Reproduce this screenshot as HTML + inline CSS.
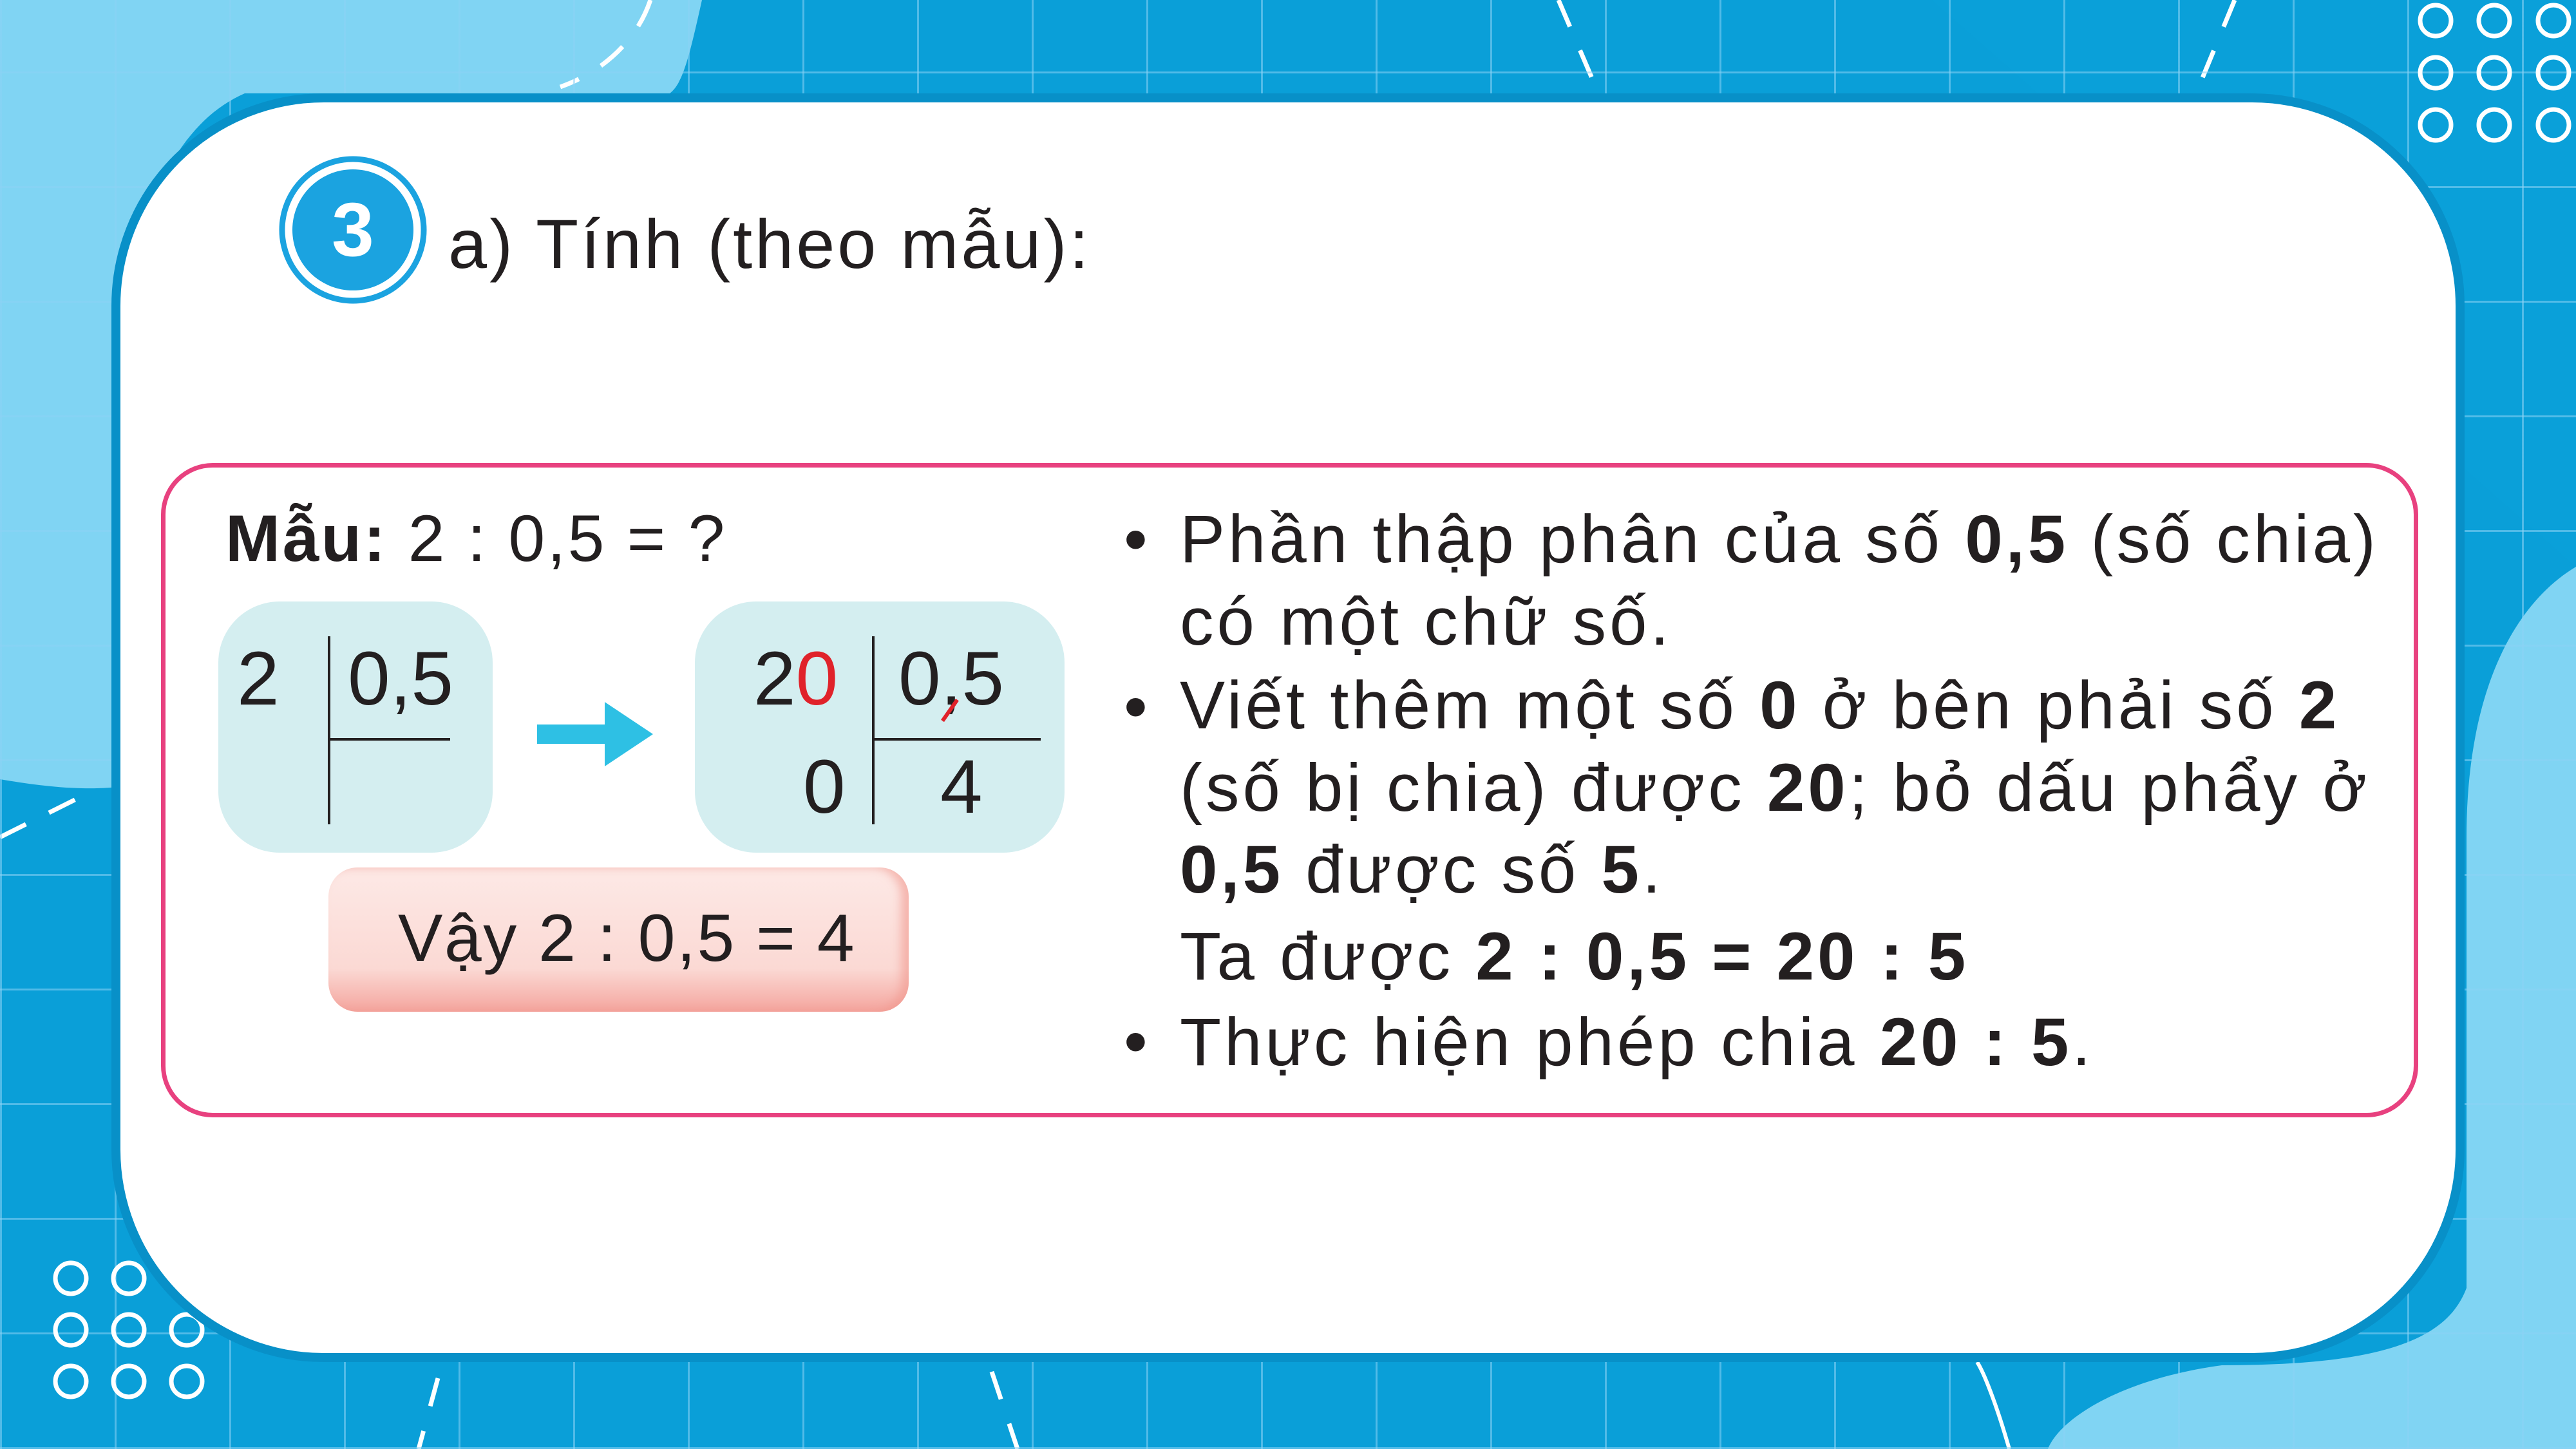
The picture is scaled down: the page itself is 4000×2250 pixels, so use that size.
<!DOCTYPE html>
<html><head><meta charset="utf-8"><style>
*{margin:0;padding:0;box-sizing:border-box}
body{width:4000px;height:2250px;overflow:hidden;position:relative;background:#0a9fd8;font-family:"Liberation Sans",sans-serif;color:#231f20}
.grid{position:absolute;inset:0;background-image:repeating-linear-gradient(90deg,rgba(140,210,245,.55) 0 3px,transparent 3px 178px),repeating-linear-gradient(0deg,rgba(140,210,245,.55) 0 3px,transparent 3px 178px)}
.abs{position:absolute}
.card{left:173px;top:145px;width:3654px;height:1970px;background:#fff;border-radius:330px;border:14px solid #0890c8}
.pink{left:250px;top:719px;width:3505px;height:1016px;border:7px solid #e8417f;border-radius:80px}
.lb{background:#d4eef0;border-radius:95px}
.t{position:absolute;white-space:nowrap;font-size:105px;line-height:1;letter-spacing:5px}
b{font-weight:bold}
</style></head><body>
<svg class="abs" style="left:0;top:0" width="4000" height="2250">
<path d="M0 0H1090C1070 90 1060 130 1040 145H380C300 180 250 260 200 400V1220C130 1230 60 1220 0 1210Z" fill="#80d4f3"/>
<path d="M4000 880C3900 940 3830 1080 3830 1300V2000C3800 2080 3700 2120 3450 2120C3300 2140 3200 2200 3180 2250H4000Z" fill="#80d4f3"/>
<path d="M3000 0H4000V880L3000 0Z" fill="#0aa3dc" opacity=".4"/>
<path d="M0 1300 140 1230" stroke="#fff" stroke-width="7" stroke-dasharray="45 40" fill="none"/>
<path d="M1010 0C990 60 940 110 870 135" stroke="#fff" stroke-width="7" stroke-dasharray="45 40" fill="none"/>
<path d="M3470 0 3410 145" stroke="#fff" stroke-width="7" stroke-dasharray="45 40" fill="none"/>
<path d="M2420 0 2480 140" stroke="#fff" stroke-width="7" stroke-dasharray="45 40" fill="none"/>
<path d="M680 2140 650 2250M1540 2130 1580 2250" stroke="#fff" stroke-width="7" stroke-dasharray="45 40" fill="none"/>
<path d="M3120 2250C3100 2180 3080 2130 3070 2115" stroke="#fff" stroke-width="6" fill="none"/>
</svg>
<div class="grid"></div>
<svg class="abs" style="left:0;top:0" width="4000" height="2250" fill="none" stroke="#fff" stroke-width="7">
<g><circle cx="3782" cy="32" r="24"/><circle cx="3873" cy="32" r="24"/><circle cx="3965" cy="32" r="24"/>
<circle cx="3782" cy="113" r="24"/><circle cx="3873" cy="113" r="24"/><circle cx="3965" cy="113" r="24"/>
<circle cx="3782" cy="194" r="24"/><circle cx="3873" cy="194" r="24"/><circle cx="3965" cy="194" r="24"/></g>
<g><circle cx="110" cy="1985" r="24"/><circle cx="200" cy="1985" r="24"/><circle cx="290" cy="1985" r="24"/>
<circle cx="110" cy="2065" r="24"/><circle cx="200" cy="2065" r="24"/><circle cx="290" cy="2065" r="24"/>
<circle cx="110" cy="2145" r="24"/><circle cx="200" cy="2145" r="24"/><circle cx="290" cy="2145" r="24"/></g>
</svg>
<div class="abs card"></div>
<svg class="abs" style="left:430px;top:240px" width="240" height="240">
<circle cx="118" cy="117" r="110" fill="#fff" stroke="#1ba3e0" stroke-width="9"/>
<circle cx="118" cy="117" r="94" fill="#1ba3e0"/>
<text x="118" y="157" text-anchor="middle" font-family="Liberation Sans" font-weight="bold" font-size="118" fill="#fff">3</text>
</svg>
<div class="t" style="left:696px;top:325px;font-size:108px;letter-spacing:4px">a) Tính (theo mẫu):</div>
<div class="abs pink"></div>
<div class="t" style="left:350px;top:785px;font-size:102px;letter-spacing:3.5px"><b>Mẫu:</b> 2 : 0,5 = ?</div>
<div class="abs lb" style="left:339px;top:934px;width:426px;height:390px"></div>
<div class="abs lb" style="left:1079px;top:934px;width:574px;height:390px"></div>
<div class="abs" style="left:509px;top:988px;width:4px;height:292px;background:#231f20"></div>
<div class="abs" style="left:509px;top:1146px;width:190px;height:4px;background:#231f20"></div>
<div class="t" style="left:368px;top:995px;font-size:118px;letter-spacing:0">2</div>
<div class="t" style="left:540px;top:995px;font-size:118px;letter-spacing:0">0,5</div>
<div class="abs" style="left:1354px;top:988px;width:4px;height:292px;background:#231f20"></div>
<div class="abs" style="left:1354px;top:1146px;width:262px;height:4px;background:#231f20"></div>
<div class="t" style="left:1170px;top:995px;font-size:118px;letter-spacing:0">2<span style="color:#e0222a">0</span></div>
<div class="t" style="left:1395px;top:995px;font-size:118px;letter-spacing:0">0,5</div>
<div class="abs" style="left:1472px;top:1083px;width:6px;height:40px;background:#e0222a;transform:rotate(35deg)"></div>
<div class="t" style="left:1247px;top:1163px;font-size:118px;letter-spacing:0">0</div>
<div class="t" style="left:1460px;top:1163px;font-size:118px;letter-spacing:0">4</div>
<svg class="abs" style="left:834px;top:1090px" width="180" height="100"><path d="M0 35H105V0L180 50 105 100V65H0Z" fill="#2ec0e4"/></svg>
<div class="abs" style="left:510px;top:1347px;width:901px;height:224px;border-radius:45px;background:linear-gradient(#fde9e6 0%,#fbd9d4 70%,#f4a59e 100%);box-shadow:inset -12px 0 14px rgba(240,150,140,.6)"></div>
<div class="t" style="left:618px;top:1405px;font-size:104px;letter-spacing:2.5px">Vậy 2 : 0,5 = 4</div>
<div class="t" style="left:1745px;top:785px;letter-spacing:0">•</div>
<div class="t" style="left:1745px;top:1045px;letter-spacing:0">•</div>
<div class="t" style="left:1745px;top:1565px;letter-spacing:0">•</div>
<div class="t" style="left:1832px;top:785px">Phần thập phân của số <b>0,5</b> (số chia)</div>
<div class="t" style="left:1832px;top:913px">có một chữ số.</div>
<div class="t" style="left:1832px;top:1043px">Viết thêm một số <b>0</b> ở bên phải số <b>2</b></div>
<div class="t" style="left:1832px;top:1171px">(số bị chia) được <b>20</b>; bỏ dấu phẩy ở</div>
<div class="t" style="left:1832px;top:1298px"><b>0,5</b> được số <b>5</b>.</div>
<div class="t" style="left:1832px;top:1433px">Ta được <b>2 : 0,5 = 20 : 5</b></div>
<div class="t" style="left:1832px;top:1566px">Thực hiện phép chia <b>20 : 5</b>.</div>
</body></html>
